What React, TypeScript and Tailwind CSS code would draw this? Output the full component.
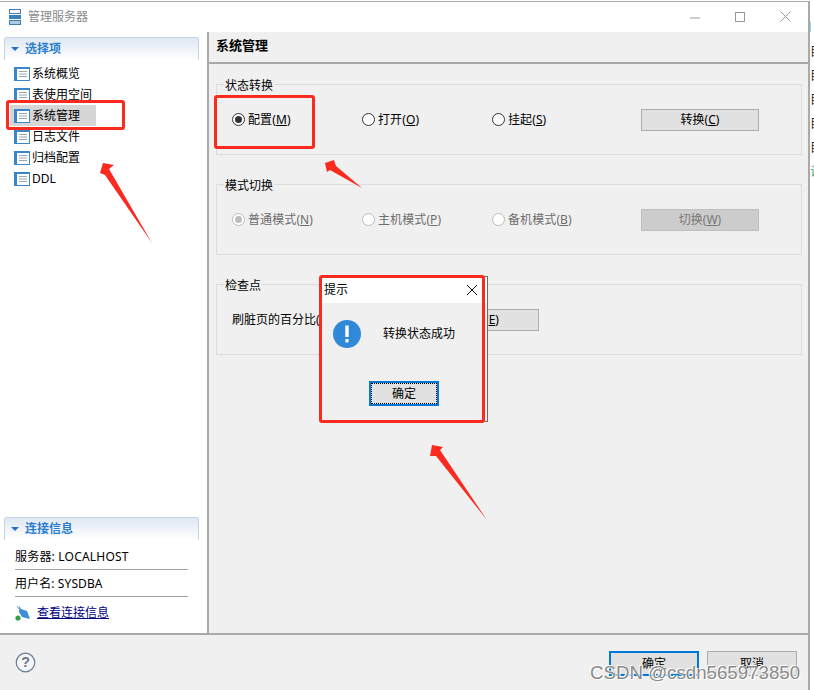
import React from 'react';

const cjk = "font-['Segoe_UI','Noto_Sans','Noto_Sans_CJK_SC',sans-serif]";

const navItems = ['系统概览', '表使用空间', '系统管理', '日志文件', '归档配置', 'DDL'];

const ListIcon: React.FC = () => (
  <svg width="16" height="14" viewBox="0 0 16 14" className="shrink-0">
    <rect x="0.5" y="0.5" width="15" height="13" fill="#fff" stroke="#3a86c8" />
    <rect x="0" y="0" width="16" height="2" fill="#3a86c8" />
    <rect x="0" y="0" width="3" height="14" fill="#3a86c8" />
    <path d="M5 4.5h8M5 7h8M5 9.5h8" stroke="#9aa6b2" strokeWidth="1" />
  </svg>
);

const SectionHead: React.FC<{ title: string }> = ({ title }) => (
  <div className="h-[23px] ml-[4px] mr-[8px] flex items-center gap-[6px] pl-[6px] border-t border-x border-[#c4d4e4] rounded-t-[3px] bg-gradient-to-b from-[#dfe8f3] to-white">
    <svg width="8" height="4" viewBox="0 0 8 4"><path d="M0 0h8L4 4z" fill="#1f76c8" /></svg>
    <span className="text-[12px] font-bold text-[#2b7dce]">{title}</span>
  </div>
);

const Radio: React.FC<{ label: string; mnemonic: string; checked?: boolean; disabled?: boolean; className?: string }> = ({ label, mnemonic, checked, disabled, className }) => (
  <div className={`flex items-center gap-[3px] text-[12px] ${disabled ? 'text-[#6d6d6d]' : 'text-black'} ${className || ''}`}>
    <span className={`w-[13px] h-[13px] rounded-full border bg-white flex items-center justify-center ${disabled ? 'border-[#bcbcbc]' : 'border-[#333]'}`}>
      {checked && <span className={`w-[7px] h-[7px] rounded-full ${disabled ? 'bg-[#bcbcbc]' : 'bg-[#333]'}`} />}
    </span>
    <span className="tracking-[0.1px]">{label}(<span className="underline">{mnemonic}</span>)</span>
  </div>
);

const Btn: React.FC<{ label: string; mnemonic: string; disabled?: boolean }> = ({ label, mnemonic, disabled }) => (
  <div className={`w-[118px] h-[22px] border flex items-center justify-center text-[12px] ${disabled ? 'bg-[#cccccc] border-[#bfbfbf] text-[#777]' : 'bg-[#e1e1e1] border-[#adadad] text-black'}`}>
    <span>{label}(<span className="underline">{mnemonic}</span>)</span>
  </div>
);

const Group: React.FC<{ title: string; children: React.ReactNode }> = ({ title, children }) => (
  <div className="relative h-[71px] border border-[#dcdcdc] flex items-center pl-[15px]">
    <span className="absolute left-[7px] top-[-6px] px-[1px] bg-[#f0f0f0] text-[12px] leading-[14px] text-black">{title}</span>
    {children}
  </div>
);

const App: React.FC = () => {
  return (
    <div className={`relative w-[814px] h-[690px] overflow-hidden bg-white flex ${cjk}`}>
      <div className="w-[810px] h-[690px] mt-px border-t border-r-2 border-[#a9a9a9] flex flex-col shrink-0">
        {/* title bar */}
        <div className="h-[30px] shrink-0 bg-white flex items-center pl-[9px] pb-[1px]">
          <svg width="12" height="16" viewBox="0 0 12 16" className="mr-[7px]">
            <rect x="0.5" y="0.5" width="11" height="4" fill="#fff" stroke="#3d7fb8" />
            <rect x="0" y="6" width="12" height="4" fill="#3d7fb8" />
            <rect x="0.5" y="11.5" width="11" height="4" fill="#a9cbe6" stroke="#3d7fb8" />
          </svg>
          <span className="text-[12px] text-[#8a8a8a]">管理服务器</span>
          <div className="ml-auto flex items-center">
            <svg width="10" height="10" viewBox="0 0 10 10" className="mr-[35px]"><path d="M0 6h10" stroke="#999" /></svg>
            <svg width="10" height="10" viewBox="0 0 10 10" className="mr-[35px]"><rect x="0.5" y="0.5" width="9" height="9" fill="none" stroke="#999" /></svg>
            <svg width="11" height="11" viewBox="0 0 11 11" className="mr-[17px]"><path d="M.5.5l10 10M10.5.5l-10 10" stroke="#999" /></svg>
          </div>
        </div>

        <div className="h-[601px] shrink-0 flex">
          {/* left panel */}
          <div className="w-[209px] shrink-0 border-r-2 border-[#a9a9a9] bg-white flex flex-col justify-between pt-[5px]">
            <div>
              <SectionHead title="选择项" />
              <div className="flex flex-col pl-[10px] pt-[3px]">
                {navItems.map(item => (
                  <div key={item} className={`h-[21px] flex items-center pl-[4px] gap-[2px] text-[12px] text-black ${item === '系统管理' ? 'w-[86px] bg-[#d6d6d6]' : ''}`}>
                    <ListIcon />
                    <span>{item}</span>
                  </div>
                ))}
              </div>
            </div>
            <div className="pb-[6px]">
              <SectionHead title="连接信息" />
              <div className="px-[15px] pt-[3px] text-[12px] text-black">
                <div className="h-[27px] pt-[2px] flex items-center border-b border-[#a3a3a3] w-[173px] tracking-[0.2px]">服务器: LOCALHOST</div>
                <div className="h-[27px] pt-[2px] flex items-center border-b border-[#a3a3a3] w-[173px] tracking-[0.1px]">用户名: SYSDBA</div>
                <div className="h-[30px] pt-[1px] flex items-center gap-[6px]">
                  <svg width="16" height="16" viewBox="0 0 16 16">
                    <path d="M4 1l2 3 6 2 3 8-8-2-3-5z" fill="#3f8fd6" />
                    <path d="M2 1l3 4" stroke="#7aa6c9" />
                    <circle cx="3" cy="13" r="2.6" fill="#2ea44f" />
                  </svg>
                  <span className="underline text-[#000080]">查看连接信息</span>
                </div>
              </div>
            </div>
          </div>

          {/* right panel */}
          <div className="flex-1 bg-[#f0f0f0] flex flex-col">
            <div className="h-[32px] shrink-0 border-b-2 border-[#a9a9a9] flex items-center pl-[7px] pb-[2px] text-[13px] font-bold text-black">系统管理</div>
            <div className="flex flex-col gap-[29px] pt-[20px] pl-[7px] pr-[6px]">
              <Group title="状态转换">
                <Radio label="配置" mnemonic="M" checked className="w-[130px]" />
                <Radio label="打开" mnemonic="O" className="w-[130px]" />
                <Radio label="挂起" mnemonic="S" className="w-[149px]" />
                <Btn label="转换" mnemonic="C" />
              </Group>
              <Group title="模式切换">
                <Radio label="普通模式" mnemonic="N" checked disabled className="w-[130px]" />
                <Radio label="主机模式" mnemonic="P" disabled className="w-[130px]" />
                <Radio label="备机模式" mnemonic="B" disabled className="w-[149px]" />
                <Btn label="切换" mnemonic="W" disabled />
              </Group>
              <Group title="检查点">
                <span className="w-[189px] text-[12px] text-black">刷脏页的百分比(%):</span>
                <Btn label="检查" mnemonic="E" />
              </Group>
            </div>
          </div>
        </div>

        {/* footer */}
        <div className="flex-1 bg-[#f0f0f0] border-t-2 border-[#a9a9a9] flex pt-[16px] pl-[15px] pr-[11px]">
          <svg width="21" height="21" viewBox="0 0 22 22" className="mt-[1px]">
            <circle cx="11" cy="11" r="9.7" fill="#f5f6f8" stroke="#6d7f99" strokeWidth="1.3" />
            <text x="11" y="16" textAnchor="middle" fontSize="15" fontWeight="700" fill="#6d7890" fontFamily="Liberation Sans">?</text>
          </svg>
          <div className="ml-auto flex gap-[8px]">
            <div className="w-[90px] h-[25px] border-2 border-[#0078d7] bg-[#e1e1e1] flex items-center justify-center text-[12px] text-black">确定</div>
            <div className="w-[90px] h-[25px] border border-[#adadad] bg-[#e1e1e1] flex items-center justify-center text-[12px] text-black">取消</div>
          </div>
        </div>
      </div>

      {/* bits of the window behind, cut off by the right edge */}
      <div className="w-[4px] h-[690px] overflow-hidden pt-[22px] flex flex-col text-[12px] leading-[24px] text-[#333]">
        <div className="w-[1px] h-[10px] bg-[#8fd8f0] mb-[8px] shrink-0" />
        {['目', '目', '目', '目', '目'].map((c, i) => (
          <span key={i} className="shrink-0 h-[24px]">{c}</span>
        ))}
        <span className="shrink-0 h-[24px] text-[#2aa876]">计</span>
      </div>

      {/* message dialog */}
      <div className="absolute left-[321px] top-[276px] w-[167px] h-[146px] bg-[#f0f0f0] border border-[#6b6b6b] flex flex-col">
        <div className="h-[26px] bg-white flex items-center justify-between pl-[2px] pr-[10px] text-[12px] text-black">
          <span>提示</span>
          <svg width="10" height="10" viewBox="0 0 10 10"><path d="M0 0l10 10M10 0L0 10" stroke="#111" /></svg>
        </div>
        <div className="flex items-center pl-[11px] pt-[17px]">
          <svg width="28" height="28" viewBox="0 0 28 28">
            <circle cx="14" cy="14" r="14" fill="#2f88d8" />
            <rect x="12.3" y="5.5" width="3.4" height="11.5" fill="#fff" />
            <rect x="12.5" y="19" width="3" height="3.4" fill="#fff" />
          </svg>
          <span className="ml-[22px] text-[12px] text-black">转换状态成功</span>
        </div>
        <div className="flex justify-center mt-[33px] pr-[1px]">
          <div className="w-[70px] h-[25px] border-2 border-[#0078d7] bg-[#e1e1e1] flex items-center justify-center text-[12px] text-black outline-1 outline-dotted outline-black outline-offset-[-3px]">确定</div>
        </div>
      </div>

      {/* red annotations */}
      <div className="absolute left-[6px] top-[100px] w-[119px] h-[30px] border-[3px] border-[#fb2a1e] rounded-[3px]" />
      <div className="absolute left-[214px] top-[95px] w-[101px] h-[54px] border-[3px] border-[#fb2a1e] rounded-[3px]" />
      <div className="absolute left-[319px] top-[275px] w-[166px] h-[148px] border-[3px] border-[#fb2a1e] rounded-[3px]" />
      <svg className="absolute left-0 top-0 pointer-events-none" width="814" height="690" viewBox="0 0 814 690">
        <path d="M103 163L114 165 109 169 152 243 105 175 100 173z" fill="#fb2a1e" />
        <path d="M325 163L334 160 336 166 362 188 330 170 327 172z" fill="#fb2a1e" />
        <path d="M432 445L443 447 440 450 487 520 436 456 430 456z" fill="#fb2a1e" />
      </svg>

      {/* watermark */}
      <span className="absolute left-[590px] top-[663px] text-[18.7px] leading-[20px] font-['Liberation_Sans',sans-serif] text-[#8a8a8a] [text-shadow:1px_1px_0_#fff,-1px_-1px_0_#fff] whitespace-nowrap">CSDN @csdn565973850</span>
    </div>
  );
};

export default App;
